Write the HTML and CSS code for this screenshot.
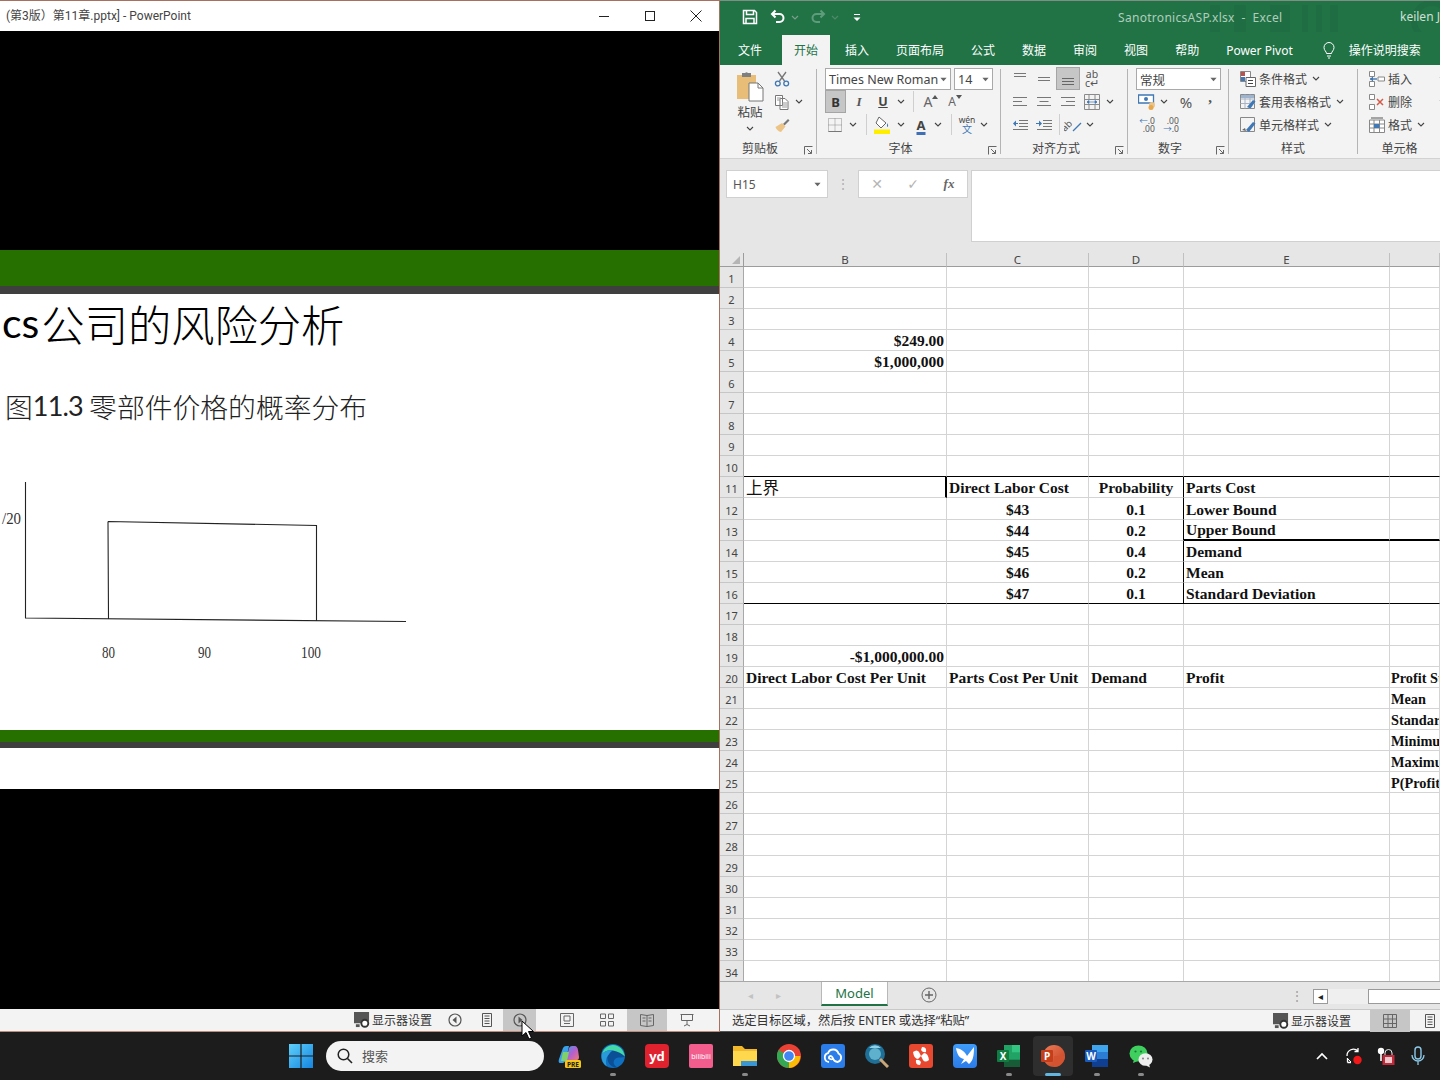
FILE: index.html
```html
<!DOCTYPE html>
<html lang="zh-CN">
<head>
<meta charset="utf-8">
<title>PowerPoint and Excel side by side</title>
<link rel="stylesheet" href="styles.css">
</head>
<body>
<svg class="sprite" aria-hidden="true">
  <defs>
    <linearGradient id="gWin" x1="0" y1="0" x2="1" y2="1"><stop offset="0" stop-color="#5fd0fb"/><stop offset="1" stop-color="#1485e0"/></linearGradient>
    <linearGradient id="gCop" x1="0" y1="0" x2="1" y2="1"><stop offset="0" stop-color="#3aa0e8"/><stop offset=".5" stop-color="#b55fd0"/><stop offset="1" stop-color="#f07a70"/></linearGradient>
    <linearGradient id="gBird" x1="0" y1="0" x2="0" y2="1"><stop offset="0" stop-color="#3f9dfb"/><stop offset="1" stop-color="#2b7be8"/></linearGradient>
    <linearGradient id="gPpt" x1="0" y1="0" x2="1" y2="1"><stop offset="0" stop-color="#ee7d5b"/><stop offset="1" stop-color="#c23e1c"/></linearGradient>
  </defs>
  <symbol id="chev" viewBox="0 0 8 5"><path d="M1 1l3 3 3-3" fill="none" stroke="#444" stroke-width="1.1"/></symbol>
  <symbol id="tri" viewBox="0 0 8 5"><path d="M.5 .5h7L4 4.500z" fill="#666"/></symbol>
  <symbol id="launch" viewBox="0 0 9 9"><path d="M.5 8.500v-8h8M3 3l4.500 4.500M7.500 4v3.500H4" fill="none" stroke="#666"/></symbol>
  <symbol id="close" viewBox="0 0 12 12"><path d="M.5 .5l11 11M11.500 .5l-11 11" stroke="#222" fill="none"/></symbol>
  <symbol id="save" viewBox="0 0 16 16"><path d="M1.500 1.500h11l2 2v11h-13zM4.500 1.500v4h7v-4M4 14.500v-5h8v5" fill="none" stroke="#fff" stroke-width="1.500"/></symbol>
  <symbol id="undo" viewBox="0 0 16 16"><path d="M5.500 1.500L2 5l3.500 3.500M2 5h7.500a3.700 3.700 0 0 1 0 8H6" fill="none" stroke="currentColor" stroke-width="2"/></symbol>
  <symbol id="redo" viewBox="0 0 16 16"><path d="M10.500 1.500L14 5l-3.500 3.500M14 5H6.500a3.700 3.700 0 0 0 0 8H10" fill="none" stroke="currentColor" stroke-width="2"/></symbol>
  <symbol id="custom" viewBox="0 0 8 9"><path d="M1 1h6v1H1zM.5 4.500h7L4 8z" fill="#fff"/></symbol>
  <symbol id="bulb" viewBox="0 0 16 18"><path d="M5.500 12.500c0-2-2.500-3-2.500-6a5 5 0 0 1 10 0c0 3-2.500 4-2.500 6zM6 15h4M7 17h2" fill="none" stroke="#fff"/></symbol>
  <symbol id="paste" viewBox="0 0 28 32"><path d="M1 5h19v24H1z" fill="#e7bd78"/><path d="M6 3h3a2 2 0 0 1 3 0h3v4H6z" fill="#7f7f7f"/><path d="M13 13h9l5 5v13H13z" fill="#fff" stroke="#777"/><path d="M22 13v5h5" fill="none" stroke="#777"/></symbol>
  <symbol id="cut" viewBox="0 0 16 16"><path d="M4 1l6.500 9M12 1L5.500 10" fill="none" stroke="#777" stroke-width="1.300"/><circle cx="3.800" cy="12.500" r="2.400" fill="none" stroke="#3f78b5" stroke-width="1.300"/><circle cx="12.200" cy="12.500" r="2.400" fill="none" stroke="#3f78b5" stroke-width="1.300"/></symbol>
  <symbol id="copy" viewBox="0 0 16 16"><path d="M1.500 1.500h7v10h-7zM6 4.500h5l3 3v8H6z" fill="#fff" stroke="#777"/><path d="M3 4h4M3 6h3M8 9h5M8 11h5M8 13h5" stroke="#999"/></symbol>
  <symbol id="brush" viewBox="0 0 16 16"><path d="M9 7L14 2l1.500 1.500-5 5z" fill="#777"/><path d="M8 6l3.500 3.500L7 15c-2 0-5-3-5.500-5z" fill="#ecc488"/></symbol>
  <symbol id="borders" viewBox="0 0 14 14"><path d="M.5 .5h13v13H.5zM7 .5v13M.5 7h13" fill="none" stroke="#8a8a8a" stroke-dasharray="1 1"/><path d="M.5 13.500h13" stroke="#777"/></symbol>
  <symbol id="fill" viewBox="0 0 18 18"><path d="M6 1l7 6-5 5-5-5z" fill="#fff" stroke="#666"/><path d="M14 7c1.500 2 1.500 3.500 0 4z" fill="#3f78b5"/><path d="M1 13.500h16V18H1z" fill="#ffee00"/></symbol>
  <symbol id="ln3l" viewBox="0 0 16 14"><path d="M1 2.500h14M1 6.500h9M1 10.500h14" stroke="#777"/></symbol>
  <symbol id="ln3c" viewBox="0 0 16 14"><path d="M1 2.500h14M3.500 6.500h9M1 10.500h14" stroke="#777"/></symbol>
  <symbol id="ln3r" viewBox="0 0 16 14"><path d="M1 2.500h14M6 6.500h9M1 10.500h14" stroke="#777"/></symbol>
  <symbol id="top" viewBox="0 0 16 14"><path d="M2 1.500h12M2 4.500h12" stroke="#777"/></symbol>
  <symbol id="mid" viewBox="0 0 16 14"><path d="M2 5.500h12M2 8.500h12" stroke="#777"/></symbol>
  <symbol id="bot" viewBox="0 0 16 14"><path d="M2 6.500h12M2 9.500h12M2 12.500h12" stroke="#666"/></symbol>
  <symbol id="indl" viewBox="0 0 16 12"><path d="M7 1.500h9M7 4.500h9M7 7.500h9M1 10.500h15" stroke="#777"/><path d="M1 4.500l3-3v6z" fill="#3f78b5"/><path d="M3 4h3v1H3z" fill="#3f78b5"/></symbol>
  <symbol id="indr" viewBox="0 0 16 12"><path d="M7 1.500h9M7 4.500h9M7 7.500h9M1 10.500h15" stroke="#777"/><path d="M6 4.500l-3-3v6z" fill="#3f78b5"/><path d="M0 4h3v1H0z" fill="#3f78b5"/></symbol>
  <symbol id="merge" viewBox="0 0 16 16"><path d="M.5 .5h15v15H.5zM.5 5.500h15M.5 10.500h15M5 .5v5M11 .5v5M5 10.500v5M11 10.500v5" fill="none" stroke="#8a8a8a"/><path d="M3 8h10M3 8l2-1.500v3zM13 8l-2-1.500v3z" stroke="#3f78b5" fill="#3f78b5" stroke-width=".7"/></symbol>
  <symbol id="orient" viewBox="0 0 18 16"><path d="M9 14L17 6" stroke="#3f78b5" stroke-width="1.200"/><text x="1" y="15" transform="rotate(-45 1 15)" class="svt-ab">ab</text></symbol>
  <symbol id="money" viewBox="0 0 18 16"><path d="M.5 1h15v8H.5z" fill="#fff" stroke="#3f78b5" stroke-width="1.300"/><circle cx="8" cy="5" r="2" fill="#3f78b5"/><circle cx="14" cy="11" r="3" fill="#ecc488"/><circle cx="13" cy="13.500" r="2.500" fill="#e7a84c"/></symbol>
  <symbol id="cond" viewBox="0 0 16 16"><path d="M.5 .5h10v10H.5z" fill="#fff" stroke="#888"/><path d="M1 1h4v4H1z" fill="#b85450"/><path d="M1 6h4v4H1z" fill="#3f78b5"/><path d="M6 6.500h9.500v9H6z" fill="#fff" stroke="#666"/><path d="M8 9.500h5M8 12.500h5" stroke="#444"/></symbol>
  <symbol id="tbl" viewBox="0 0 16 16"><path d="M.5 .5h14v14H.5z" fill="#f4f4f4" stroke="#888"/><path d="M.5 5h14M.5 9.500h14M5 .5v14M10 .5v14" stroke="#a9b4c4"/><path d="M1 1h13v3H1z" fill="#9db4cf"/><path d="M7 13l6-7 2.500 1.500-5 7z" fill="#3f78b5"/></symbol>
  <symbol id="cstyle" viewBox="0 0 16 16"><path d="M.5 .5h14v14H.5z" fill="#f4f4f4" stroke="#888"/><path d="M6 13l7-8 2.500 1.500L9 15z" fill="#3f78b5"/><path d="M2 13l3-2 1 3z" fill="#666"/></symbol>
  <symbol id="cins" viewBox="0 0 16 16"><path d="M.5 .5h5v5h-5zM.5 10.500h5v5h-5zM9 6h6.500v4H9z" fill="#fff" stroke="#888"/><path d="M1 8h7" stroke="#3f78b5" stroke-width="1.400"/><path d="M1 8l3-2.500v5z" fill="#3f78b5"/></symbol>
  <symbol id="cdel" viewBox="0 0 16 16"><path d="M.5 .5h5v5h-5zM.5 10.500h5v5h-5z" fill="#fff" stroke="#888"/><path d="M8 5l6 6M14 5l-6 6" stroke="#d25b4a" stroke-width="1.500"/></symbol>
  <symbol id="cfmt" viewBox="0 0 16 16"><path d="M.5 3h15v12.500H.5zM.5 7h15M.5 11h15M5 3v12.500M10.500 3v12.500" fill="#fff" stroke="#888"/><path d="M5 7h5.500v4H5z" fill="#3f78b5"/><path d="M2 1h12" stroke="#555"/></symbol>
  <symbol id="disp" viewBox="0 0 17 17"><path d="M0 0h16v10h-5v2H0z" fill="#555"/><circle cx="11.500" cy="12" r="3.700" fill="#fff" stroke="#333" stroke-width="2"/><path d="M2 13h4v3H2z" fill="#555"/></symbol>
  <symbol id="prev" viewBox="0 0 14 14"><circle cx="7" cy="7" r="6" fill="none" stroke="#555" stroke-width="1.200"/><path d="M8.500 3.500v7L4.500 7z" fill="#555"/></symbol>
  <symbol id="next" viewBox="0 0 14 14"><circle cx="7" cy="7" r="6" fill="none" stroke="#555" stroke-width="1.200"/><path d="M5.500 3.500v7L9.500 7z" fill="#555"/></symbol>
  <symbol id="notes" viewBox="0 0 14 14"><path d="M2.500 .5h9v13h-9zM4.500 3h5M4.500 5.500h5M4.500 8h5M4.500 10.500h5" fill="none" stroke="#555"/></symbol>
  <symbol id="pnorm" viewBox="0 0 14 14"><path d="M.5 .5h13v13H.5zM4 3h6v5H4zM4 10.500h6" fill="none" stroke="#666"/></symbol>
  <symbol id="sorter" viewBox="0 0 14 14"><path d="M.5 1h5v4.500h-5zM8.500 1h5v4.500h-5zM.5 8.500h5V13h-5zM8.500 8.500h5V13h-5z" fill="none" stroke="#666"/></symbol>
  <symbol id="read" viewBox="0 0 14 14"><path d="M.5 1.500l6.500 1 6.500-1v11l-6.500 1-6.500-1zM7 2.500v11M2.500 5h3M2.500 8h3M8.500 5h3M8.500 8h3" fill="none" stroke="#666"/></symbol>
  <symbol id="show" viewBox="0 0 14 14"><path d="M.5 1.500h13M1.500 1.500v6h11v-6M7 7.500v4M4 13l3-1.500L10 13" fill="none" stroke="#666"/></symbol>
  <symbol id="grid" viewBox="0 0 14 14"><path d="M.5 .5h13v13H.5zM5 .5v13M9.500 .5v13M.5 5h13M.5 9.500h13" fill="none" stroke="#666"/></symbol>
  <symbol id="plus" viewBox="0 0 16 16"><circle cx="8" cy="8" r="7" fill="none" stroke="#666"/><path d="M4 8h8M8 4v8" stroke="#666" stroke-width="1.400"/></symbol>
  <symbol id="win" viewBox="0 0 24 24"><path d="M0 0h11.400v11.400H0zM12.600 0H24v11.400H12.600zM0 12.600h11.400V24H0zM12.600 12.600H24V24H12.600z" fill="url(#gWin)"/></symbol>
  <symbol id="search" viewBox="0 0 16 16"><circle cx="6.500" cy="6.500" r="5.300" fill="none" stroke="#222" stroke-width="1.500"/><path d="M10.500 10.500l4.500 4.500" stroke="#222" stroke-width="1.600"/></symbol>
  <symbol id="copilot" viewBox="0 0 24 24"><path d="M2 15L6 4q1-2 3-2h3l-3 14q-1 3-3 3H3q-2 0-1-4z" fill="#3aa0e8"/><path d="M9 16l3-12q1-2 3-2h3q2 0 3 4l1 7q0 3-2 3z" fill="url(#gCop)"/><path d="M6 8h6l-2 9H4z" fill="#7fcf6a"/><rect x="8" y="16" width="16" height="8" rx="1.500" fill="#f5c518"/><text x="16" y="23" class="svt-pre">PRE</text></symbol>
  <symbol id="edge" viewBox="0 0 24 24"><circle cx="12" cy="12" r="12" fill="#0f6fc0"/><path d="M23.800 13c0-4-4-7-8.500-7C9 6 6 10 6.500 15c.5 5 5 9 9.500 8.300-4-2-4.500-7-1-9 3-1.500 6-.5 8.800-1.300z" fill="#0b4f96"/><path d="M23.800 12.500C23 6 18 1 12 1 7 1 2.500 4.500 1 10c2.500-3 7-4.500 11-3.500 5 1 9 3 11.800 6z" fill="#46d9a8"/><path d="M1 10c-1 5 1 10 5 12.500-1.500-3-1.500-8 1-11C9 9 10 7 12 6.500 8 5.500 3.500 7 1 10z" fill="#2a9bd8"/></symbol>
  <symbol id="yd" viewBox="0 0 24 24"><rect width="24" height="24" rx="4" fill="#e0212e"/><text x="12" y="16.500" class="svt-yd">yd</text></symbol>
  <symbol id="bili" viewBox="0 0 24 24"><rect width="24" height="24" rx="2" fill="#f25d8e"/><text x="12" y="15" class="svt-bili">bilibili</text></symbol>
  <symbol id="folder" viewBox="0 0 24 24"><path d="M0 2h9l3 3h12v17H0z" fill="#f4b92b"/><path d="M0 7h24v15H0z" fill="#ffd84d"/><path d="M8 17h16v5H8z" fill="#3a97d4"/></symbol>
  <symbol id="chrome" viewBox="0 0 24 24"><circle cx="12" cy="12" r="12" fill="#e94235"/><path d="M12 12L1.600 6A12 12 0 0 0 12 24l6-12z" fill="#34a853"/><path d="M12 12h11.400A12 12 0 0 1 12 24z" fill="#fbbc05"/><circle cx="12" cy="12" r="5.500" fill="#4285f4" stroke="#fff" stroke-width="1.300"/></symbol>
  <symbol id="cloud" viewBox="0 0 24 24"><rect width="24" height="24" rx="3" fill="#2b7de9"/><path d="M8 18a4.500 4.500 0 0 1-1-8.800A5.500 5.500 0 0 1 17.500 9.500 4.500 4.500 0 0 1 16.500 18c-3 0-4-2-4.500-3.500S10 11 8.500 12.500 8.500 16 12 15" fill="none" stroke="#fff" stroke-width="1.800"/></symbol>
  <symbol id="magn" viewBox="0 0 24 24"><circle cx="10" cy="10" r="10" fill="#1f6f97"/><circle cx="10" cy="10" r="6" fill="#5eb0cc"/><path d="M4 4a8 8 0 0 1 12 0z" fill="#8fd0e6"/><path d="M15 15l8 8" stroke="#c9a77a" stroke-width="3"/></symbol>
  <symbol id="redapp" viewBox="0 0 24 24"><rect width="24" height="24" rx="3" fill="#e8482f"/><path d="M4 8q4-3 6 0l2 4-3 3q-4 0-5-7zM20 16q-4 3-6 0l-2-4 3-3q4 0 5 7zM13 3q5 0 4 5-3 1-5-2zM11 21q-5 0-4-5 3-1 5 2z" fill="#fff"/></symbol>
  <symbol id="bird" viewBox="0 0 24 24"><rect width="24" height="24" rx="4" fill="url(#gBird)"/><path d="M3 4c6 1 9 4 11 8l7-9c0 9-1 14-5 17l-3-3-5 3 3-5C6 14 4 10 3 4z" fill="#fff"/></symbol>
  <symbol id="xl" viewBox="0 0 24 24"><path d="M7 1h16v22H7z" fill="#21a366"/><path d="M15 1h8v7.300h-8z" fill="#33c481"/><path d="M7 15.700h16V23H7z" fill="#185c37"/><rect y="6" width="12" height="12" rx="1" fill="#107c41"/><text x="6" y="16" class="svt-app">X</text></symbol>
  <symbol id="pp" viewBox="0 0 24 24"><circle cx="13" cy="12" r="11" fill="url(#gPpt)"/><path d="M13 12h11a11 11 0 0 1-11 11z" fill="#d35230"/><rect y="6" width="12" height="12" rx="1" fill="#c43e1c"/><text x="6" y="16" class="svt-app">P</text></symbol>
  <symbol id="wd" viewBox="0 0 24 24"><path d="M7 1h16v22H7z" fill="#2b7cd3"/><path d="M7 1h16v7H7z" fill="#41a5ee"/><path d="M7 15h16v8H7z" fill="#103f91"/><rect y="6" width="12" height="12" rx="1" fill="#185abd"/><text x="6" y="16" class="svt-app">W</text></symbol>
  <symbol id="wechat" viewBox="0 0 24 24"><ellipse cx="9.500" cy="9.500" rx="9" ry="8" fill="#3fcf5f"/><path d="M5 15l-1 4 5-2z" fill="#3fcf5f"/><circle cx="6.500" cy="7.500" r="1.100" fill="#1c7a35"/><circle cx="12" cy="7.500" r="1.100" fill="#1c7a35"/><ellipse cx="16.500" cy="15.500" rx="7" ry="6.300" fill="#eee"/><path d="M20 20l1 3.500-4-2z" fill="#eee"/><circle cx="14" cy="14.500" r=".9" fill="#777"/><circle cx="19" cy="14.500" r=".9" fill="#777"/></symbol>
  <symbol id="up" viewBox="0 0 12 8"><path d="M1 7l5-5 5 5" fill="none" stroke="#fff" stroke-width="1.700"/></symbol>
  <symbol id="sync" viewBox="0 0 18 18"><path d="M2 9a6.500 6.500 0 0 1 11-5M13 1v3.500H9.500M2.500 11v4.500M2.500 15.500H6" fill="none" stroke="#fff" stroke-width="1.300"/><path d="M2.500 11.500l3.500 3.500" stroke="#fff"/><circle cx="12.500" cy="13" r="4.200" fill="#f01818"/></symbol>
  <symbol id="lock" viewBox="0 0 18 18"><circle cx="4" cy="4" r="3.200" fill="#fff"/><path d="M4 7v7" stroke="#fff" stroke-width="1.600"/><path d="M5.500 8h12v10h-12z" fill="#c22a3b"/><path d="M8 8V6a3.500 3.500 0 0 1 7 0v2" fill="none" stroke="#eee"/><path d="M8 10h7v6H8z" fill="#f1c9cd"/></symbol>
  <symbol id="mic" viewBox="0 0 14 20"><rect x="4" y="1" width="6" height="12" rx="3" fill="none" stroke="#8cc8e8" stroke-width="1.400"/><path d="M1 9a6 6 0 0 0 12 0M7 15v4" fill="none" stroke="#8cc8e8" stroke-width="1.300"/></symbol>
  <symbol id="cursor" viewBox="0 0 13 20"><path d="M1 1v15l4-3.500 3 6.500 2.500-1-3-6.500h5z" fill="#fff" stroke="#000"/></symbol>
</svg>

<div class="desktop">
  <div class="panes">
    <section class="ppt">
      <header class="ppt-title">
        <span class="ppt-name">(第3版）第11章.pptx] - PowerPoint</span>
        <div class="win-btns">
          <span class="win-btn"><span class="w-min"></span></span>
          <span class="win-btn"><span class="w-max"></span></span>
          <span class="win-btn"><svg class="i-close"><use href="#close"/></svg></span>
        </div>
      </header>
      <div class="letter-top"></div>
      <div class="band-green"></div>
      <div class="band-dark"></div>
      <main class="slide">
        <h1 class="slide-title"><span class="lat-t">cs</span>公司的风险分析</h1>
        <p class="slide-sub">图<span class="lat-s">11.3</span> 零部件价格的概率分布</p>
        <svg class="chart" width="420" height="200" viewBox="0 470 420 200">
          <path d="M25.500 482V618L406 621.500M108 521.500L316.500 525.500V620.500M108 521.500L108.500 618.500" fill="none" stroke="#222" stroke-width="1.100"/>
          <text x="2" y="524" class="ch-t" textLength="19" lengthAdjust="spacingAndGlyphs">/20</text>
          <text x="102" y="658" class="ch-t" textLength="13" lengthAdjust="spacingAndGlyphs">80</text>
          <text x="198" y="658" class="ch-t" textLength="13" lengthAdjust="spacingAndGlyphs">90</text>
          <text x="301" y="658" class="ch-t" textLength="20" lengthAdjust="spacingAndGlyphs">100</text>
        </svg>
      </main>
      <div class="band-green small"></div>
      <div class="band-dark small"></div>
      <div class="slide-next"></div>
      <div class="letter-bot"></div>
      <footer class="ppt-status">
        <svg class="i16"><use href="#disp"/></svg><span class="disp-t">显示器设置</span>
        <span class="st w32"><svg class="i14"><use href="#prev"/></svg></span>
        <span class="st w32"><svg class="i14"><use href="#notes"/></svg></span>
        <span class="st w33 st-on"><svg class="i14"><use href="#next"/></svg></span>
        <span class="st w40 st-gap"><svg class="i14"><use href="#pnorm"/></svg></span>
        <span class="st w40"><svg class="i14"><use href="#sorter"/></svg></span>
        <span class="st w40 st-on"><svg class="i14"><use href="#read"/></svg></span>
        <span class="st w40"><svg class="i14"><use href="#show"/></svg></span>
      </footer>
    </section>

    <section class="xl">
      <header class="xl-title">
        <svg class="xl-deco" width="240" height="31" viewBox="0 0 240 31"><path d="M0 4h10v27H0zM24 4h12v27H24zM60 4h20v27H60zM92 4h6v27h-6zM106 4h6v27h-6zM120 4h8v27h-8z" fill="#1f6b41"/><circle cx="222" cy="20" r="18" fill="none" stroke="#1f6b41" stroke-width="6"/></svg>
        <svg class="i16 qa-save"><use href="#save"/></svg>
        <svg class="i16 qa-undo"><use href="#undo"/></svg>
        <svg class="i-chev qa-c1 chev-w"><use href="#chev"/></svg>
        <svg class="i16 qa-redo"><use href="#redo"/></svg>
        <svg class="i-chev qa-c2 chev-w"><use href="#chev"/></svg>
        <svg class="i-cust"><use href="#custom"/></svg>
        <span class="xl-name">SanotronicsASP.xlsx&nbsp; -&nbsp; Excel</span>
        <span class="xl-user">keilen Ji</span>
      </header>
      <nav class="xl-tabs">
        <span class="tab first">文件</span><span class="tab on">开始</span><span class="tab">插入</span><span class="tab">页面布局</span><span class="tab">公式</span><span class="tab">数据</span><span class="tab">审阅</span><span class="tab">视图</span><span class="tab">帮助</span><span class="tab">Power Pivot</span>
        <svg class="i-bulb"><use href="#bulb"/></svg><span class="tab-search">操作说明搜索</span>
      </nav>

      <div class="ribbon">
        <div class="grp g-clip">
          <div class="grp-body clip-body">
            <div class="paste">
              <svg class="i-paste"><use href="#paste"/></svg>
              <span>粘贴</span>
              <svg class="i-chev"><use href="#chev"/></svg>
            </div>
            <div class="clip-col">
              <div class="rrow"><span class="b w22"><svg class="i16"><use href="#cut"/></svg></span></div>
              <div class="rrow"><span class="b w22"><svg class="i16"><use href="#copy"/></svg></span><span class="b w12"><svg class="i-chev"><use href="#chev"/></svg></span></div>
              <div class="rrow"><span class="b w22"><svg class="i16"><use href="#brush"/></svg></span></div>
            </div>
          </div>
          <div class="grp-label"><span>剪贴板</span><span class="launch"><svg class="i9"><use href="#launch"/></svg></span></div>
        </div>
        <i class="sep"></i>
        <div class="grp g-font">
          <div class="grp-body">
            <div class="rrow">
              <span class="combo w126"><span class="combo-t">Times New Roman</span><svg class="i-tri"><use href="#tri"/></svg></span>
              <span class="combo w39 combo-gap"><span class="combo-t">14</span><svg class="i-tri"><use href="#tri"/></svg></span>
            </div>
            <div class="rrow">
              <span class="b w21 b-on b-bold">B</span><span class="b w1"></span>
              <span class="b w24 b-ital">I</span>
              <span class="b w24 b-und">U</span>
              <span class="b w12"><svg class="i-chev"><use href="#chev"/></svg></span>
              <span class="b w12"><i class="vsep"></i></span>
              <span class="b w24 b-a">A<svg class="i-up"><path d="M0 4l3-4 3 4z"/></svg></span>
              <span class="b w24 b-a b-a2">A<svg class="i-up"><path d="M0 0l3 4 3-4z"/></svg></span>
            </div>
            <div class="rrow">
              <span class="b w20"><svg class="i14"><use href="#borders"/></svg></span>
              <span class="b w16"><svg class="i-chev"><use href="#chev"/></svg></span>
              <span class="b w10"><i class="vsep"></i></span>
              <span class="b w22"><svg class="i18"><use href="#fill"/></svg></span>
              <span class="b w15"><svg class="i-chev"><use href="#chev"/></svg></span>
              <span class="b w26 b-fcol">A</span>
              <span class="b w8"><svg class="i-chev"><use href="#chev"/></svg></span>
              <span class="b w18"><i class="vsep"></i></span>
              <span class="b w14 b-wen"><small>wén</small><b>文</b></span>
              <span class="b w20"><svg class="i-chev"><use href="#chev"/></svg></span>
            </div>
          </div>
          <div class="grp-label"><span>字体</span><span class="launch"><svg class="i9"><use href="#launch"/></svg></span></div>
        </div>
        <i class="sep"></i>
        <div class="grp g-align">
          <div class="grp-body">
            <div class="rrow">
              <span class="b w24"><svg class="i16"><use href="#top"/></svg></span>
              <span class="b w24"><svg class="i16"><use href="#mid"/></svg></span>
              <span class="b w24 b-on"><svg class="i16"><use href="#bot"/></svg></span>
              <span class="b w24 b-ab"><span>ab<br>c↵</span></span>
            </div>
            <div class="rrow">
              <span class="b w24"><svg class="i16"><use href="#ln3l"/></svg></span>
              <span class="b w24"><svg class="i16"><use href="#ln3c"/></svg></span>
              <span class="b w24"><svg class="i16"><use href="#ln3r"/></svg></span>
              <span class="b w24"><svg class="i16"><use href="#merge"/></svg></span>
              <span class="b w12"><svg class="i-chev"><use href="#chev"/></svg></span>
            </div>
            <div class="rrow">
              <span class="b w24"><svg class="i16"><use href="#indl"/></svg></span>
              <span class="b w24"><svg class="i16"><use href="#indr"/></svg></span>
              <span class="b w6"><i class="vsep"></i></span>
              <span class="b w22"><svg class="i-ori"><use href="#orient"/></svg></span>
              <span class="b w12"><svg class="i-chev"><use href="#chev"/></svg></span>
            </div>
          </div>
          <div class="grp-label"><span>对齐方式</span><span class="launch"><svg class="i9"><use href="#launch"/></svg></span></div>
        </div>
        <i class="sep"></i>
        <div class="grp g-num">
          <div class="grp-body">
            <div class="rrow"><span class="combo w85"><span class="combo-t">常规</span><svg class="i-tri"><use href="#tri"/></svg></span></div>
            <div class="rrow">
              <span class="b w22"><svg class="i18"><use href="#money"/></svg></span>
              <span class="b w12"><svg class="i-chev"><use href="#chev"/></svg></span>
              <span class="b w32 b-pct">%</span>
              <span class="b w16 b-comma">,</span>
            </div>
            <div class="rrow">
              <span class="b w22 b-dec"><span><em>←</em>.0<br>.00</span></span>
              <span class="b w26 b-dec"><span>.00<br><em>→</em>.0</span></span>
            </div>
          </div>
          <div class="grp-label"><span>数字</span><span class="launch"><svg class="i9"><use href="#launch"/></svg></span></div>
        </div>
        <i class="sep"></i>
        <div class="grp g-style">
          <div class="grp-body">
            <div class="rrow r-cmd"><svg class="i16"><use href="#cond"/></svg><span>条件格式</span><svg class="i-chev"><use href="#chev"/></svg></div>
            <div class="rrow r-cmd"><svg class="i16"><use href="#tbl"/></svg><span>套用表格格式</span><svg class="i-chev"><use href="#chev"/></svg></div>
            <div class="rrow r-cmd"><svg class="i16"><use href="#cstyle"/></svg><span>单元格样式</span><svg class="i-chev"><use href="#chev"/></svg></div>
          </div>
          <div class="grp-label plain"><span>样式</span></div>
        </div>
        <i class="sep"></i>
        <div class="grp g-cell">
          <div class="grp-body">
            <div class="rrow r-cmd"><svg class="i16"><use href="#cins"/></svg><span>插入</span><svg class="i-chev far"><use href="#chev"/></svg></div>
            <div class="rrow r-cmd"><svg class="i16"><use href="#cdel"/></svg><span>删除</span><svg class="i-chev far"><use href="#chev"/></svg></div>
            <div class="rrow r-cmd"><svg class="i16"><use href="#cfmt"/></svg><span>格式</span><svg class="i-chev"><use href="#chev"/></svg></div>
          </div>
          <div class="grp-label plain"><span>单元格</span></div>
        </div>
      </div>

      <div class="formula">
        <div class="namebox"><span>H15</span><svg class="i-tri"><use href="#tri"/></svg></div>
        <div class="fdots">⋮</div>
        <div class="fbtns"><span class="fb">✕</span><span class="fb">✓</span><span class="fb fx">fx</span></div>
        <div class="finput"></div>
      </div>

      <div class="sheet">
        <table class="grid">
          <colgroup><col class="c-h"><col class="c-b"><col class="c-c"><col class="c-d"><col class="c-e"><col class="c-f"></colgroup>
          <thead><tr><th class="corner"><span class="corner-tri"></span></th><th>B</th><th>C</th><th>D</th><th>E</th><th></th></tr></thead>
          <tbody>
            <tr><th>1</th><td></td><td></td><td></td><td></td><td></td></tr>
            <tr><th>2</th><td></td><td></td><td></td><td></td><td></td></tr>
            <tr><th>3</th><td></td><td></td><td></td><td></td><td></td></tr>
            <tr><th>4</th><td class="r">$249.00</td><td></td><td></td><td></td><td></td></tr>
            <tr><th>5</th><td class="r">$1,000,000</td><td></td><td></td><td></td><td></td></tr>
            <tr><th>6</th><td></td><td></td><td></td><td></td><td></td></tr>
            <tr><th>7</th><td></td><td></td><td></td><td></td><td></td></tr>
            <tr><th>8</th><td></td><td></td><td></td><td></td><td></td></tr>
            <tr><th>9</th><td></td><td></td><td></td><td></td><td></td></tr>
            <tr class="under"><th>10</th><td></td><td></td><td></td><td></td><td></td></tr>
            <tr><th>11</th><td class="cjk bk-r2">上界</td><td>Direct Labor Cost</td><td class="c bk-r">Probability</td><td>Parts Cost</td><td></td></tr>
            <tr class="tall"><th>12</th><td></td><td class="c">$43</td><td class="c bk-r">0.1</td><td>Lower Bound</td><td></td></tr>
            <tr><th>13</th><td></td><td class="c">$44</td><td class="c bk-r">0.2</td><td class="bk-b">Upper Bound</td><td class="bk-b"></td></tr>
            <tr><th>14</th><td></td><td class="c">$45</td><td class="c bk-r">0.4</td><td>Demand</td><td></td></tr>
            <tr><th>15</th><td></td><td class="c">$46</td><td class="c bk-r">0.2</td><td>Mean</td><td></td></tr>
            <tr class="under"><th>16</th><td></td><td class="c">$47</td><td class="c bk-r">0.1</td><td>Standard Deviation</td><td></td></tr>
            <tr><th>17</th><td></td><td></td><td></td><td></td><td></td></tr>
            <tr><th>18</th><td></td><td></td><td></td><td></td><td></td></tr>
            <tr><th>19</th><td class="r">-$1,000,000.00</td><td></td><td></td><td></td><td></td></tr>
            <tr><th>20</th><td>Direct Labor Cost Per Unit</td><td>Parts Cost Per Unit</td><td>Demand</td><td>Profit</td><td class="f">Profit Statistics</td></tr>
            <tr><th>21</th><td></td><td></td><td></td><td></td><td class="f">Mean</td></tr>
            <tr><th>22</th><td></td><td></td><td></td><td></td><td class="f">Standard Deviation</td></tr>
            <tr><th>23</th><td></td><td></td><td></td><td></td><td class="f">Minimum</td></tr>
            <tr><th>24</th><td></td><td></td><td></td><td></td><td class="f">Maximum</td></tr>
            <tr><th>25</th><td></td><td></td><td></td><td></td><td class="f">P(Profit</td></tr>
            <tr><th>26</th><td></td><td></td><td></td><td></td><td></td></tr>
            <tr><th>27</th><td></td><td></td><td></td><td></td><td></td></tr>
            <tr><th>28</th><td></td><td></td><td></td><td></td><td></td></tr>
            <tr><th>29</th><td></td><td></td><td></td><td></td><td></td></tr>
            <tr><th>30</th><td></td><td></td><td></td><td></td><td></td></tr>
            <tr><th>31</th><td></td><td></td><td></td><td></td><td></td></tr>
            <tr><th>32</th><td></td><td></td><td></td><td></td><td></td></tr>
            <tr><th>33</th><td></td><td></td><td></td><td></td><td></td></tr>
            <tr><th>34</th><td></td><td></td><td></td><td></td><td></td></tr>
          </tbody>
        </table>
      </div>

      <div class="tabbar">
        <span class="nav">◂</span><span class="nav">▸</span>
        <span class="sheet-tab">Model</span>
        <svg class="i16 add"><use href="#plus"/></svg>
        <span class="tb-right">
          <span class="tb-dots">⋮</span>
          <span class="sb-btn">◂</span>
          <span class="sb-track"></span>
          <span class="sb-thumb"></span>
        </span>
      </div>
      <footer class="xl-status">
        <span class="st-msg">选定目标区域，然后按 ENTER 或选择“粘贴”</span>
        <span class="st-right">
          <svg class="i16"><use href="#disp"/></svg><span class="disp-t">显示器设置</span>
          <span class="st w40 st-on st-gap2"><svg class="i14"><use href="#grid"/></svg></span>
          <span class="st w30"><svg class="i14 pl"><use href="#notes"/></svg></span>
        </span>
      </footer>
    </section>
  </div>

  <footer class="taskbar">
    <svg class="i24 tb-win"><use href="#win"/></svg>
    <div class="pill"><svg class="i16"><use href="#search"/></svg><span>搜索</span></div>
    <div class="apps">
      <span class="app"><svg class="i24"><use href="#copilot"/></svg><i class="dot off"></i></span>
      <span class="app"><svg class="i24"><use href="#edge"/></svg><i class="dot"></i></span>
      <span class="app"><svg class="i24"><use href="#yd"/></svg><i class="dot off"></i></span>
      <span class="app"><svg class="i24"><use href="#bili"/></svg><i class="dot off"></i></span>
      <span class="app"><svg class="i24"><use href="#folder"/></svg><i class="dot"></i></span>
      <span class="app"><svg class="i24"><use href="#chrome"/></svg><i class="dot off"></i></span>
      <span class="app"><svg class="i24"><use href="#cloud"/></svg><i class="dot off"></i></span>
      <span class="app"><svg class="i24"><use href="#magn"/></svg><i class="dot off"></i></span>
      <span class="app"><svg class="i24"><use href="#redapp"/></svg><i class="dot off"></i></span>
      <span class="app"><svg class="i24"><use href="#bird"/></svg><i class="dot off"></i></span>
      <span class="app"><svg class="i24"><use href="#xl"/></svg><i class="dot"></i></span>
      <span class="app active"><svg class="i24"><use href="#pp"/></svg><i class="dot"></i></span>
      <span class="app"><svg class="i24"><use href="#wd"/></svg><i class="dot"></i></span>
      <span class="app"><svg class="i24"><use href="#wechat"/></svg><i class="dot"></i></span>
    </div>
    <div class="tray">
      <span class="tr"><svg class="i-upw"><use href="#up"/></svg></span>
      <span class="tr"><svg class="i18"><use href="#sync"/></svg></span>
      <span class="tr"><svg class="i18"><use href="#lock"/></svg></span>
      <span class="tr"><svg class="i-mic"><use href="#mic"/></svg></span>
    </div>
  </footer>
  <svg class="cursor"><use href="#cursor"/></svg>
</div>
</body>
</html>
```

FILE: styles.css
```css
* { box-sizing: border-box; }
html, body { margin: 0; padding: 0; }
body { width: 1440px; height: 1080px; overflow: hidden; font-family: "Noto Sans", "Noto Sans CJK SC", sans-serif; font-size: 12px; color: #444; }
svg { display: block; flex: none; }
.sprite { position: absolute; width: 0; height: 0; }
.svt-pre { font: 700 6.500px "Noto Sans", sans-serif; fill: #222; text-anchor: middle; }
.svt-yd { font: 700 13px "Noto Sans", sans-serif; fill: #fff; text-anchor: middle; }
.svt-bili { font: 400 7px "Noto Sans", sans-serif; fill: #fff; text-anchor: middle; }
.svt-app { font: 700 10px "Noto Sans", sans-serif; fill: #fff; text-anchor: middle; }
.svt-ab { font: 9.500px "Noto Sans", sans-serif; fill: #555; }

.desktop { position: relative; width: 1440px; height: 1080px; display: flex; flex-direction: column; overflow: hidden; }
.panes { display: flex; height: 1032px; }
.i9 { width: 9px; height: 9px; }
.i14 { width: 14px; height: 14px; }
.i16 { width: 16px; height: 16px; }
.i18 { width: 18px; height: 18px; }
.i24 { width: 24px; height: 24px; }
.i-chev { width: 8px; height: 5px; }
.i-tri { width: 7px; height: 5px; }
.i-close { width: 12px; height: 12px; }
.i-ori { width: 18px; height: 16px; }

/* PowerPoint */
.ppt { width: 720px; display: flex; flex-direction: column; border-right: 1px solid #a8705e; background: #000; }
.ppt-title { height: 31px; flex: none; background: #fff; border-top: 1px solid #a8705e; display: flex; align-items: center; padding-left: 6px; }
.ppt-name { font: 12px Roboto, "Noto Sans CJK SC", sans-serif; color: #444; white-space: nowrap; margin-bottom: 3px; }
.win-btns { margin-left: auto; display: flex; }
.win-btn { width: 46px; display: flex; justify-content: center; align-items: center; height: 30px; color: #222; }
.w-min { width: 10px; height: 1px; background: #222; }
.w-max { width: 10px; height: 10px; border: 1px solid #222; }
.letter-top { height: 219px; flex: none; background: #000; }
.band-green { height: 36px; flex: none; background: #267000; }
.band-green.small { height: 12px; }
.band-dark { height: 8px; flex: none; background: #3f3f3f; }
.band-dark.small { height: 6px; }
.slide { height: 436px; flex: none; background: #fff; overflow: hidden; color: #111; display: flex; flex-direction: column; }
.slide-title { height: 64px; flex: none; margin: 0 0 0 2px; padding-bottom: 6px; display: flex; align-items: center; font: 300 43.300px/58px "Noto Sans CJK SC", sans-serif; color: #000; white-space: nowrap; }
.lat-t { font: 400 41px/58px Lato, sans-serif; margin-right: 2px; }
.slide-sub { height: 40px; flex: none; margin: 29px 0 0 5px; padding-bottom: 2px; display: flex; align-items: center; font: 300 27.800px/38px "Noto Sans CJK SC", sans-serif; color: #222; white-space: pre; }
.lat-s { font: 400 27px/38px Lato, sans-serif; letter-spacing: -.8px; }
.chart { margin-top: 43px; }
.ch-t { font: 16px "Liberation Serif", serif; fill: #333; }
.slide-next { height: 41px; flex: none; background: #fff; }
.letter-bot { height: 220px; flex: none; background: #000; }
.ppt-status { height: 23px; flex: none; background: #f3f3f3; border-bottom: 1px solid #c08a78; display: flex; align-items: center; justify-content: flex-end; padding-right: 12px; }
.disp-t { font-size: 12px; color: #333; margin-left: 2px; white-space: nowrap; }
.ppt-status .disp-t { margin-right: 7px; }
.st { height: 22px; display: flex; align-items: center; justify-content: center; flex: none; }
.st-on { background: #c6c6c6; }
.st-gap { margin-left: 11px; }
.w30 { width: 30px; } .w32 { width: 32px; } .w33 { width: 33px; } .w40 { width: 40px; }

/* Excel */
.xl { width: 720px; display: flex; flex-direction: column; background: #e6e6e6; overflow: hidden; border-top: 1px solid #7f8f86; }
.xl-title { position: relative; height: 30px; flex: none; background: #217346; display: flex; align-items: center; padding: 2px 0 0 22px; color: #fff; }
.xl-deco { position: absolute; left: 490px; top: 0; opacity: .75; }
.qa-undo { margin-left: 12px; color: #fff; }
.qa-c1 { margin-left: 5px; opacity: .6; }
.chev-w { filter: invert(1); }
.qa-redo { margin-left: 11px; color: #5e9c7c; }
.qa-c2 { margin-left: 5px; opacity: .3; }
.i-cust { width: 8px; height: 9px; margin-left: 14px; }
.xl-name { position: relative; margin-left: 257px; color: #b0cdbc; font-size: 12px; letter-spacing: .3px; white-space: nowrap; }
.xl-user { position: relative; margin-left: auto; width: 40px; overflow: hidden; color: #cfe0d6; font-size: 12px; white-space: nowrap; margin-bottom: 2px; }
.xl-tabs { height: 34px; flex: none; background: #217346; display: flex; align-items: flex-end; padding-left: 6px; gap: 3px; color: #fff; font-size: 12px; }
.tab { height: 30px; padding: 0 12px; display: flex; align-items: center; white-space: nowrap; }
.tab.first { margin-right: 5px; }
.tab.on { background: #f3f3f3; color: #217346; }
.i-bulb { width: 16px; height: 18px; margin: 0 0 6px 13px; }
.tab-search { height: 30px; display: flex; align-items: center; margin-left: 9px; white-space: nowrap; }

.ribbon { height: 94px; flex: none; background: #f3f3f3; border-bottom: 1px solid #d2d2d2; display: flex; color: #444; }
.sep { width: 1px; background: #b4b4b4; margin: 4px 0 4px; flex: none; }
.grp { padding-top: 2px; display: flex; flex-direction: column; flex: none; }
.grp-body { height: 69px; flex: none; }
.g-clip { width: 96px; padding-left: 13px; }
.g-font { width: 183px; padding-left: 8px; }
.g-align { width: 126px; padding-left: 7px; }
.g-num { width: 100px; padding-left: 8px; }
.g-style { width: 128px; padding-left: 11px; }
.g-cell { flex: 1; padding-left: 11px; }
.grp-label { display: flex; align-items: center; height: 21px; margin-top: 2px; font-size: 12px; }
.grp-label > span:first-child { flex: 1; text-align: center; white-space: nowrap; }
.g-clip .grp-label { margin-left: -13px; }
.g-font .grp-label { margin-left: -8px; }
.g-align .grp-label { margin-left: -7px; }
.g-num .grp-label { margin-left: -8px; }
.g-style .grp-label { margin-left: -11px; }
.g-cell .grp-label { margin-left: -11px; padding-right: 6px; }
.launch { width: 16px; display: flex; justify-content: center; padding-top: 4px; }
.clip-body { display: flex; }
.paste { width: 34px; display: flex; flex-direction: column; align-items: center; font-size: 12.500px; line-height: 17px; }
.i-paste { width: 28px; height: 32px; margin-top: 3px; }
.paste span { margin-top: 2px; }
.paste .i-chev { margin-top: 5px; }
.clip-col { margin-left: 4px; }
.rrow { height: 23px; display: flex; align-items: center; white-space: nowrap; }
.b { height: 23px; display: flex; align-items: center; justify-content: center; flex: none; }
.w1 { width: 1px; } .w6 { width: 6px; } .w8 { width: 8px; } .w10 { width: 10px; } .w12 { width: 12px; } .w14 { width: 14px; } .w15 { width: 15px; } .w16 { width: 16px; } .w18 { width: 18px; } .w20 { width: 20px; } .w21 { width: 21px; } .w22 { width: 22px; } .w24 { width: 24px; } .w26 { width: 26px; } .w39 { width: 39px; } .w85 { width: 85px; } .w126 { width: 126px; }
.b-on { background: #c6c6c6; border: 1px solid #a5a5a5; }
.b-bold { font: 700 13px "Noto Sans", sans-serif; color: #333; }
.b-ital { font: italic 700 13px "Liberation Serif", serif; color: #555; }
.b-und { font: 700 12.500px "Noto Sans", sans-serif; color: #444; text-decoration: underline; }
.b-a { font-size: 14px; color: #666; gap: 0; align-items: center; }
.b-a2 { font-size: 12px; }
.i-up { width: 6px; height: 4px; margin-top: -10px; fill: #555; }
.b-fcol { font: 700 13px/14px "Noto Sans", sans-serif; color: #444; text-decoration: underline; text-decoration-color: #3f6fb5; text-decoration-thickness: 3px; }
.b-wen { flex-direction: column; line-height: 8px; }
.b-wen small { font-size: 8.500px; color: #444; }
.b-wen b { font-size: 10px; line-height: 10px; color: #3f78b5; font-weight: 400; }
.vsep { display: block; width: 1px; height: 21px; background: #cfcfcf; }
.b-ab { font: 10.500px/9px "Noto Sans", sans-serif; color: #555; text-align: center; }
.b-pct { font-size: 15px; color: #555; }
.b-comma { font: 700 15px "Liberation Serif", serif; color: #555; padding-bottom: 8px; }
.b-dec { font-size: 8.500px; line-height: 8px; color: #555; text-align: right; }
.b-dec em { font-style: normal; color: #3f78b5; }
.combo { height: 22px; margin-top: 1px; background: #fff; border: 1px solid #a9a9a9; display: flex; align-items: center; justify-content: space-between; padding: 0 3px; font-size: 12.500px; flex: none; color: #444; }
.combo-gap { margin-left: 3px; }
.combo-t { white-space: nowrap; }
.r-cmd { font-size: 12px; gap: 3px; }
.r-cmd span { margin-right: 2px; }
.i-chev.far { margin-left: 22px; }

.formula { height: 94px; flex: none; background: #e6e6e6; padding: 11px 0 11px 6px; display: flex; align-items: flex-start; }
.namebox { width: 102px; height: 28px; background: #fff; border: 1px solid #d0d0d0; display: flex; align-items: center; justify-content: space-between; padding: 0 6px; font-size: 12px; color: #555; }
.fdots { width: 30px; height: 28px; text-align: center; line-height: 28px; color: #aaa; }
.fbtns { width: 110px; height: 28px; background: #fff; border: 1px solid #d0d0d0; display: flex; align-items: center; }
.fb { flex: 1; text-align: center; color: #b5b5b5; font: 700 14px "DejaVu Sans", sans-serif; }
.fx { font: italic 700 13px "Liberation Serif", serif; color: #666; }
.finput { flex: 1; height: 72px; margin-left: 3px; background: #fff; border: 1px solid #d0d0d0; border-right: 0; }

.sheet { height: 728px; flex: none; background: #fff; overflow: hidden; }
.grid { width: 720px; table-layout: fixed; border-collapse: separate; border-spacing: 0; }
.c-h { width: 24px; } .c-b { width: 203px; } .c-c { width: 142px; } .c-d { width: 95px; } .c-e { width: 206px; } .c-f { width: 50px; }
.grid th { background: #e6e6e6; font-weight: 400; color: #444; font-size: 11px; padding: 0; border-right: 1px solid #a8a8a8; border-bottom: 1px solid #c6c6c6; height: 21px; line-height: 16px; vertical-align: bottom; text-align: center; }
.grid thead th { height: 14px; line-height: 13px; font-size: 11.500px; border-bottom: 1px solid #9c9c9c; border-right: 1px solid #c0c0c0; vertical-align: middle; }
.grid thead th.corner { border-right: 1px solid #9c9c9c; }
.corner-tri { display: block; width: 0; height: 0; margin-left: 12px; border-style: solid; border-width: 0 0 8px 8px; border-color: transparent transparent #b5b5b5 transparent; }
.grid td { height: 21px; padding: 0 2px; font: 700 15.500px/18px "Liberation Serif", serif; color: #111; border-right: 1px solid #d4d4d4; border-bottom: 1px solid #d4d4d4; white-space: nowrap; overflow: hidden; vertical-align: bottom; }
.grid tr.tall td, .grid tr.tall th { height: 22px; }
.grid td.r { text-align: right; }
.grid td.c { text-align: center; }
.grid td.f { font-size: 14.300px; padding-left: 1px; }
.grid td.cjk { font: 400 16.500px/19px "Noto Sans CJK SC", sans-serif; }
.grid tr.under td { border-bottom: 1px solid #000; }
.grid td.bk-r { border-right: 1px solid #000; }
.grid td.bk-r2 { border-right: 2px solid #000; }
.grid td.bk-b { border-bottom: 2px solid #000; }

.tabbar { height: 28px; flex: none; background: #e6e6e6; border-top: 1px solid #a8a8a8; display: flex; align-items: flex-start; padding-left: 16px; }
.nav { width: 28px; height: 26px; line-height: 26px; text-align: center; color: #c2c2c2; font-size: 10px; }
.sheet-tab { margin-left: 29px; width: 67px; height: 24px; background: #fff; border: 1px solid #b8b8b8; border-top: 0; border-bottom: 2px solid #217346; color: #217346; text-align: center; line-height: 22px; font-size: 13px; }
.add { margin: 5px 0 0 33px; }
.tb-right { margin-left: auto; display: flex; align-items: center; height: 27px; flex: none; }
.tb-dots { color: #999; margin-right: 10px; font-size: 12px; }
.sb-btn { width: 15px; height: 15px; background: #fff; border: 1px solid #9a9a9a; font-size: 10px; line-height: 12px; text-align: center; color: #222; margin-top: 2px; }
.sb-track { width: 40px; height: 15px; background: #efefef; margin-top: 2px; }
.sb-thumb { width: 72px; height: 15px; background: #fff; border: 1px solid #9a9a9a; border-right: 0; margin-top: 2px; }
.xl-status { height: 23px; flex: none; background: #f3f3f3; border-top: 1px solid #c8c8c8; border-bottom: 1px solid #555; display: flex; align-items: center; padding-left: 12px; font-size: 12.300px; }
.st-msg { color: #333; white-space: nowrap; margin-bottom: 1px; }
.st-right { margin-left: auto; display: flex; align-items: center; }
.st-gap2 { margin-left: 19px; }
.xl-status .w30 { justify-content: flex-start; }
.pl { margin-left: 13px; }

/* Taskbar */
.taskbar { height: 48px; flex: none; background: #1c1c1c; display: flex; align-items: center; padding-left: 289px; }
.tb-win { flex: none; }
.pill { margin-left: 13px; width: 218px; height: 30px; border-radius: 15px; background: #f3f3f3; display: flex; align-items: center; padding-left: 11px; color: #555; font-size: 13px; gap: 9px; }
.pill span { margin-top: -2px; }
.apps { display: flex; margin-left: 5px; gap: 4px; }
.app { width: 40px; height: 40px; padding-top: 8px; display: flex; flex-direction: column; align-items: center; border-radius: 4px; }
.app.active { background: #2e2e2e; }
.dot { width: 6px; height: 3px; margin-top: 5px; border-radius: 2px; background: #8a8a8a; }
.dot.off { background: transparent; }
.active .dot { width: 16px; background: #62b6e0; }
.tray { margin-left: auto; display: flex; padding-right: 6px; }
.tr { width: 32px; height: 24px; display: flex; align-items: center; justify-content: center; }
.i-upw { width: 12px; height: 8px; }
.i-mic { width: 14px; height: 20px; }
.cursor { position: absolute; left: 521px; top: 1020px; width: 13px; height: 20px; }
```
